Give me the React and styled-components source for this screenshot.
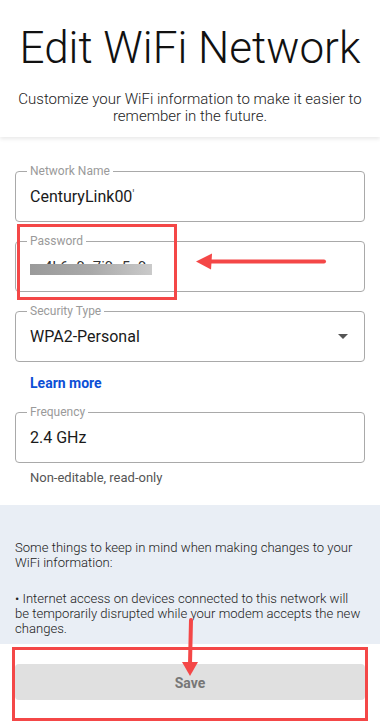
import React from "react";
import styled, { createGlobalStyle } from "styled-components";

const Global = createGlobalStyle`
  html, body { margin: 0; padding: 0; background: #fff; }
  body { font-family: Roboto, "Liberation Sans", Arial, sans-serif; -webkit-font-smoothing: antialiased; }
  * { box-sizing: border-box; }
`;

const Page = styled.div`
  position: relative;
  width: 380px;
  height: 721px;
  overflow: hidden;
  background: #fff;
  display: flex;
  flex-direction: column;
`;

const Header = styled.header`
  padding: 22px 10px 12px;
  text-align: center;
  background: #fff;
  box-shadow: 0 2px 4px rgba(0, 0, 0, 0.09);
  position: relative;
  z-index: 1;
`;

const Title = styled.h1`
  margin: 0;
  font-weight: 300;
  font-size: 44px;
  line-height: 52px;
  color: #111;
  white-space: nowrap;
`;

const Subtitle = styled.p`
  margin: 17px 0 0;
  font-weight: 300;
  font-size: 15px;
  line-height: 17px;
  color: #222;
`;

const Form = styled.div`
  padding: 34px 15px 0;
  display: flex;
  flex-direction: column;
`;

const Field = styled.div`
  position: relative;
  height: 51px;
  border: 1px solid #a9a9a9;
  border-radius: 4px;
  display: flex;
  align-items: center;
  padding: 0 14px;
  margin-top: ${(p) => p.$mt || 0}px;
`;

const Label = styled.span`
  position: absolute;
  top: -8px;
  left: 11px;
  padding: 0 3px;
  background: #fff;
  font-size: 12px;
  line-height: 14px;
  color: #9a9a9a;
`;

const Value = styled.span`
  flex: 1;
  font-size: 16px;
  color: #1a1a1a;
  white-space: nowrap;
`;

const Tick = styled.span`
  color: #666;
  font-size: 13px;
  vertical-align: 3px;
`;

const Caret = styled.span`
  width: 0;
  height: 0;
  border-left: 5px solid transparent;
  border-right: 5px solid transparent;
  border-top: 5px solid #555;
  margin-right: 2px;
`;

const Obscured = styled.span`
  position: relative;
  display: inline-block;
  font-size: 15px;
  line-height: 18px;
  color: #333;
  padding-left: 14px;
  width: 122px;
  overflow: hidden;
  vertical-align: middle;
`;

const BlurBar = styled.span`
  position: absolute;
  left: 0;
  top: 6px;
  width: 122px;
  height: 11px;
  background: linear-gradient(90deg, #9a9a9a 0%, #a9a9a9 50%, #cacaca 100%);
`;

const LearnMore = styled.a`
  margin: 12px 0 0 15px;
  font-size: 14px;
  line-height: 18px;
  font-weight: 700;
  color: #0c4fd6;
  text-decoration: none;
  align-self: flex-start;
`;

const Helper = styled.div`
  margin-top: 6px;
  padding-left: 15px;
  font-size: 13px;
  line-height: 17px;
  color: #555;
`;

const Info = styled.section`
  margin-top: 19px;
  background: #e9eef5;
  padding: 35px 15px 8px;
  font-size: 13.1px;
  font-weight: 300;
  line-height: 15px;
  color: #222;
`;

const InfoP = styled.p`
  margin: ${(p) => (p.$first ? 0 : "21px")} 0 0;
`;

const Footer = styled.div`
  padding: 20px 15px;
`;

const SaveButton = styled.button`
  width: 100%;
  height: 36px;
  border: none;
  border-radius: 4px;
  background: #e0e0e0;
  color: #777;
  font-family: inherit;
  font-size: 14px;
  font-weight: 700;
  padding-top: 3px;
`;

const Overlay = styled.svg`
  position: absolute;
  left: 0;
  top: 0;
  pointer-events: none;
  z-index: 5;
`;

export default function App() {
  return (
    <>
      <Global />
      <Page>
        <Header>
          <Title>Edit WiFi Network</Title>
          <Subtitle>
            Customize your WiFi information to make it easier to remember in the future.
          </Subtitle>
        </Header>
        <Form>
          <Field>
            <Label>Network Name</Label>
            <Value>
              CenturyLink00<Tick>'</Tick>
            </Value>
          </Field>
          <Field $mt={19}>
            <Label>Password</Label>
            <Value>
              <Obscured>
                4k6e9c7i9p5e9
                <BlurBar />
              </Obscured>
            </Value>
          </Field>
          <Field $mt={19}>
            <Label>Security Type</Label>
            <Value>WPA2-Personal</Value>
            <Caret />
          </Field>
          <LearnMore href="#">Learn more</LearnMore>
          <Field $mt={20}>
            <Label>Frequency</Label>
            <Value>2.4 GHz</Value>
          </Field>
          <Helper>Non-editable, read-only</Helper>
        </Form>
        <Info>
          <InfoP $first>Some things to keep in mind when making changes to your WiFi information:</InfoP>
          <InfoP>
            • Internet access on devices connected to this network will be temporarily disrupted while your modem accepts the new changes.
          </InfoP>
        </Info>
        <Footer>
          <SaveButton>Save</SaveButton>
        </Footer>
        <Overlay width="380" height="721" viewBox="0 0 380 721">
          <rect x="18.5" y="225.5" width="157" height="73" fill="none" stroke="#f44747" strokeWidth="3" />
          <line x1="324" y1="261.5" x2="206" y2="261.5" stroke="#f44747" strokeWidth="4" strokeLinecap="round" />
          <polygon points="196,261.5 212,253.5 211,269.5" fill="#f44747" />
          <rect x="13.5" y="648.5" width="353" height="71" fill="none" stroke="#f44747" strokeWidth="3" />
          <line x1="191" y1="620" x2="190" y2="664" stroke="#f44747" strokeWidth="4" strokeLinecap="round" />
          <polygon points="182,662 198,662 190,676" fill="#f44747" />
        </Overlay>
      </Page>
    </>
  );
}
